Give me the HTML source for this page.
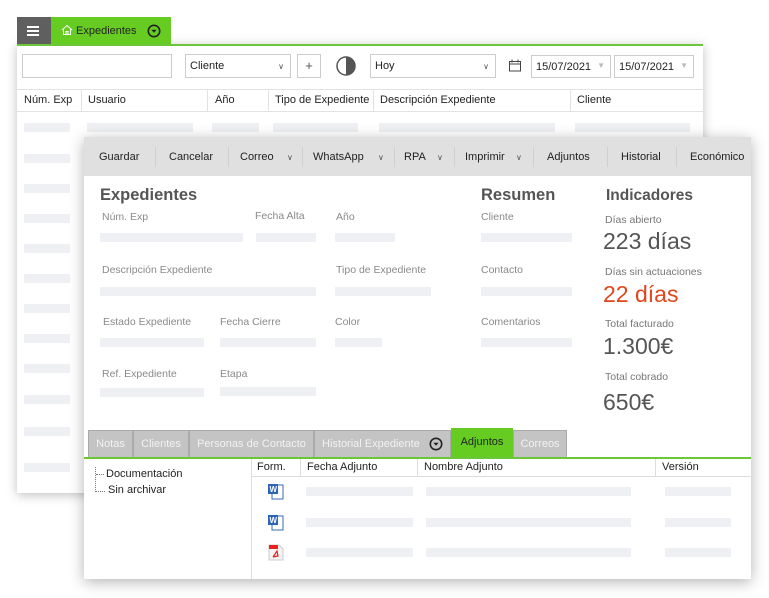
<!DOCTYPE html>
<html><head><meta charset="utf-8"><style>
*{box-sizing:border-box;margin:0;padding:0}
body{width:769px;height:598px;background:#fff;position:relative;overflow:hidden;font-family:"Liberation Sans","DejaVu Sans",sans-serif;font-size:11px;color:#222}
.a{position:absolute}
.bar{position:absolute;height:9px;background:#eef0f3}
.sep{position:absolute;top:10px;width:1px;height:20px;background:#cfcfcf}
.chev{position:absolute;font-size:8px;color:#555}
.lbl{position:absolute;color:#8a8a8a;font-size:10.5px}
.tab{position:absolute;top:430px;height:27px;background:#c4c4c4;border:1px solid #aaa;border-bottom:none;color:#f2f2f2;font-size:11px;line-height:27px;text-align:center}
</style></head><body>
<div class="a" style="left:17px;top:44px;width:686px;height:449px;background:#fff;box-shadow:0 2px 10px rgba(0,0,0,.25)"></div>
<div class="a" style="left:17px;top:17px;width:34px;height:28px;background:#5f5f5f"></div>
<div class="a" style="left:27px;top:26px;width:12px;height:1.5px;background:#fff;box-shadow:0 4px 0 #fff,0 8px 0 #fff"></div>
<div class="a" style="left:51px;top:17px;width:120px;height:28px;background:#66cc22"></div>
<svg class="a" style="left:61px;top:24px" width="12" height="12" viewBox="0 0 12 12"><path d="M1 6L6 1.5 11 6M2.5 5v5.5h7V5M5 10.5V7.5h2v3" fill="none" stroke="#fff" stroke-width="1"/></svg>
<div class="a" style="left:76px;top:25px;font-size:11px;color:#222">Expedientes</div>
<svg class="a" style="left:147px;top:24px" width="14" height="14" viewBox="0 0 14 14"><circle cx="7" cy="7" r="5.7" fill="none" stroke="#222" stroke-width="1.6"/><path d="M4.3 5.8h5.4L7 8.8z" fill="#222"/></svg>
<div class="a" style="left:17px;top:44px;width:686px;height:2px;background:#6cc63a"></div>
<div class="a" style="left:22px;top:54px;width:150px;height:24px;border:1px solid #ccc"></div>
<div class="a" style="left:185px;top:54px;width:106px;height:24px;border:1px solid #ccc;padding:5px 4px;font-size:11px">Cliente<span class="chev" style="right:6px;top:7px">&#8744;</span></div>
<div class="a" style="left:297px;top:54px;width:24px;height:24px;border:1px solid #ccc;text-align:center;line-height:22px;font-size:13px;color:#555">+</div>
<svg class="a" style="left:335px;top:55px" width="22" height="22" viewBox="0 0 22 22"><circle cx="11" cy="11" r="9" fill="none" stroke="#555" stroke-width="1.5"/><path d="M11 2a9 9 0 0 1 0 18z" fill="#555"/></svg>
<div class="a" style="left:370px;top:54px;width:126px;height:24px;border:1px solid #ccc;padding:5px 4px;font-size:11px">Hoy<span class="chev" style="right:6px;top:7px">&#8744;</span></div>
<svg class="a" style="left:508px;top:59px" width="14" height="13" viewBox="0 0 14 13"><rect x="1.5" y="2.5" width="11" height="9.5" fill="none" stroke="#444"/><path d="M1.5 5h11M4 0.5v3M10 0.5v3" stroke="#444"/></svg>
<div class="a" style="left:531px;top:55px;width:80px;height:23px;border:1px solid #ccc;padding:5px 4px;font-size:11px">15/07/2021<span class="a" style="right:5px;top:5px;color:#bbb;font-size:8px">&#9660;</span></div>
<div class="a" style="left:614px;top:55px;width:80px;height:23px;border:1px solid #ccc;padding:5px 4px;font-size:11px">15/07/2021<span class="a" style="right:5px;top:5px;color:#bbb;font-size:8px">&#9660;</span></div>
<div class="a" style="left:17px;top:89px;width:686px;height:23px;border-top:1px solid #e2e2e2;border-bottom:1px solid #e2e2e2"></div>
<div class="a" style="left:24px;top:94px;font-size:11px">Núm. Exp</div>
<div class="a" style="left:81px;top:89px;width:1px;height:23px;background:#e2e2e2"></div>
<div class="a" style="left:88px;top:94px;font-size:11px">Usuario</div>
<div class="a" style="left:207px;top:89px;width:1px;height:23px;background:#e2e2e2"></div>
<div class="a" style="left:215px;top:94px;font-size:11px">Año</div>
<div class="a" style="left:268px;top:89px;width:1px;height:23px;background:#e2e2e2"></div>
<div class="a" style="left:275px;top:94px;font-size:11px">Tipo de Expediente</div>
<div class="a" style="left:373px;top:89px;width:1px;height:23px;background:#e2e2e2"></div>
<div class="a" style="left:380px;top:94px;font-size:11px">Descripción Expediente</div>
<div class="a" style="left:570px;top:89px;width:1px;height:23px;background:#e2e2e2"></div>
<div class="a" style="left:577px;top:94px;font-size:11px">Cliente</div>
<div class="bar" style="left:87px;top:123px;width:106px"></div>
<div class="bar" style="left:212px;top:123px;width:47px"></div>
<div class="bar" style="left:273px;top:123px;width:85px"></div>
<div class="bar" style="left:379px;top:123px;width:176px"></div>
<div class="bar" style="left:575px;top:123px;width:115px"></div>
<div class="bar" style="left:24px;top:123px;width:46px"></div>
<div class="bar" style="left:24px;top:154px;width:46px"></div>
<div class="bar" style="left:24px;top:184px;width:46px"></div>
<div class="bar" style="left:24px;top:214px;width:46px"></div>
<div class="bar" style="left:24px;top:244px;width:46px"></div>
<div class="bar" style="left:24px;top:274px;width:46px"></div>
<div class="bar" style="left:24px;top:304px;width:46px"></div>
<div class="bar" style="left:24px;top:334px;width:46px"></div>
<div class="bar" style="left:24px;top:364px;width:46px"></div>
<div class="bar" style="left:24px;top:395px;width:46px"></div>
<div class="bar" style="left:24px;top:427px;width:46px"></div>
<div class="bar" style="left:24px;top:463px;width:46px"></div>

<div class="a" style="left:84px;top:137px;width:667px;height:442px;background:#fff;box-shadow:0 3px 14px rgba(0,0,0,.3)"></div>
<div class="a" style="left:84px;top:137px;width:667px;height:39px;background:#e0e0e0;font-size:11px">
<div class="a" style="left:15px;top:14px">Guardar</div><div class="sep" style="left:71px"></div>
<div class="a" style="left:85px;top:14px">Cancelar</div><div class="sep" style="left:144px"></div>
<div class="a" style="left:156px;top:14px">Correo</div><div class="chev" style="left:203px;top:16px">&#8744;</div><div class="sep" style="left:218px"></div>
<div class="a" style="left:229px;top:14px">WhatsApp</div><div class="chev" style="left:294px;top:16px">&#8744;</div><div class="sep" style="left:310px"></div>
<div class="a" style="left:320px;top:14px">RPA</div><div class="chev" style="left:353px;top:16px">&#8744;</div><div class="sep" style="left:370px"></div>
<div class="a" style="left:381px;top:14px">Imprimir</div><div class="chev" style="left:432px;top:16px">&#8744;</div><div class="sep" style="left:449px"></div>
<div class="a" style="left:463px;top:14px">Adjuntos</div><div class="sep" style="left:523px"></div>
<div class="a" style="left:537px;top:14px">Historial</div><div class="sep" style="left:592px"></div>
<div class="a" style="left:606px;top:14px">Económico</div>
</div>
<div class="a" style="left:100px;top:186px;font-size:16.5px;font-weight:bold;color:#555">Expedientes</div>
<div class="lbl" style="left:102px;top:211px">Núm. Exp</div>
<div class="lbl" style="left:255px;top:210px">Fecha Alta</div>
<div class="lbl" style="left:336px;top:211px">Año</div>
<div class="bar" style="left:100px;top:233px;width:143px"></div>
<div class="bar" style="left:256px;top:233px;width:60px"></div>
<div class="bar" style="left:335px;top:233px;width:60px"></div>
<div class="lbl" style="left:102px;top:264px">Descripción Expediente</div>
<div class="lbl" style="left:336px;top:264px">Tipo de Expediente</div>
<div class="bar" style="left:100px;top:287px;width:216px"></div>
<div class="bar" style="left:335px;top:287px;width:96px"></div>
<div class="lbl" style="left:103px;top:316px">Estado Expediente</div>
<div class="lbl" style="left:220px;top:316px">Fecha Cierre</div>
<div class="lbl" style="left:335px;top:316px">Color</div>
<div class="bar" style="left:100px;top:338px;width:104px"></div>
<div class="bar" style="left:220px;top:338px;width:96px"></div>
<div class="bar" style="left:335px;top:338px;width:47px"></div>
<div class="lbl" style="left:102px;top:368px">Ref. Expediente</div>
<div class="lbl" style="left:220px;top:368px">Etapa</div>
<div class="bar" style="left:100px;top:388px;width:104px"></div>
<div class="bar" style="left:220px;top:387px;width:96px"></div>
<div class="a" style="left:481px;top:186px;font-size:16.5px;font-weight:bold;color:#555">Resumen</div>
<div class="lbl" style="left:481px;top:211px">Cliente</div>
<div class="bar" style="left:481px;top:233px;width:91px"></div>
<div class="lbl" style="left:481px;top:264px">Contacto</div>
<div class="bar" style="left:481px;top:287px;width:91px"></div>
<div class="lbl" style="left:481px;top:316px">Comentarios</div>
<div class="bar" style="left:481px;top:338px;width:91px"></div>
<div class="a" style="left:606px;top:187px;font-size:15.5px;font-weight:bold;color:#555">Indicadores</div>
<div class="lbl" style="left:605px;top:214px;color:#777">Días abierto</div>
<div class="a" style="left:603px;top:228px;font-size:23px;color:#555">223 días</div>
<div class="lbl" style="left:605px;top:266px;color:#777">Días sin actuaciones</div>
<div class="a" style="left:603px;top:281px;font-size:23px;color:#e0461a">22 días</div>
<div class="lbl" style="left:605px;top:318px;color:#777">Total facturado</div>
<div class="a" style="left:603px;top:333px;font-size:23px;color:#555">1.300€</div>
<div class="lbl" style="left:605px;top:371px;color:#777">Total cobrado</div>
<div class="a" style="left:603px;top:389px;font-size:23px;color:#555">650€</div>

<div class="tab" style="left:88px;width:45px">Notas</div>
<div class="tab" style="left:133px;width:56px">Clientes</div>
<div class="tab" style="left:189px;width:125px">Personas de Contacto</div>
<div class="tab" style="left:314px;width:137px;text-align:left;padding-left:7px">Historial Expediente</div>
<svg class="a" style="left:429px;top:437px" width="14" height="14" viewBox="0 0 14 14"><circle cx="7" cy="7" r="5.7" fill="none" stroke="#222" stroke-width="1.6"/><path d="M4.3 5.8h5.4L7 8.8z" fill="#222"/></svg>
<div class="tab" style="left:451px;width:62px;background:#66cc22;border-color:#66cc22;color:#222;top:428px;height:29px">Adjuntos</div>
<div class="tab" style="left:513px;width:54px">Correos</div>
<div class="a" style="left:84px;top:457px;width:667px;height:2px;background:#6cc63a"></div>
<div class="a" style="left:95px;top:467px;width:1px;height:25px;border-left:1px dotted #777"></div>
<div class="a" style="left:96px;top:474px;width:8px;border-top:1px dotted #777"></div>
<div class="a" style="left:96px;top:491px;width:9px;border-top:1px dotted #777"></div>
<div class="a" style="left:106px;top:468px;font-size:11px">Documentación</div>
<div class="a" style="left:108px;top:484px;font-size:11px">Sin archivar</div>
<div class="a" style="left:251px;top:459px;width:1px;height:120px;background:#ddd"></div>
<div class="a" style="left:252px;top:476px;width:499px;height:1px;background:#ddd"></div>
<div class="a" style="left:257px;top:461px;font-size:11px">Form.</div>
<div class="a" style="left:300px;top:459px;width:1px;height:17px;background:#ddd"></div>
<div class="a" style="left:307px;top:461px;font-size:11px">Fecha Adjunto</div>
<div class="a" style="left:417px;top:459px;width:1px;height:17px;background:#ddd"></div>
<div class="a" style="left:424px;top:461px;font-size:11px">Nombre Adjunto</div>
<div class="a" style="left:655px;top:459px;width:1px;height:17px;background:#ddd"></div>
<div class="a" style="left:662px;top:461px;font-size:11px">Versión</div>
<svg class="a" style="left:267px;top:483px" width="18" height="17" viewBox="0 0 18 17"><rect x="5" y="2" width="11" height="14" fill="#fff" stroke="#3a6db5"/><rect x="1" y="1" width="10" height="10" fill="#2b64b8"/><text x="2.5" y="9" font-size="8" fill="#fff" font-family="Liberation Sans" font-weight="bold">W</text></svg>
<svg class="a" style="left:267px;top:514px" width="18" height="17" viewBox="0 0 18 17"><rect x="5" y="2" width="11" height="14" fill="#fff" stroke="#3a6db5"/><rect x="1" y="1" width="10" height="10" fill="#2b64b8"/><text x="2.5" y="9" font-size="8" fill="#fff" font-family="Liberation Sans" font-weight="bold">W</text></svg>
<svg class="a" style="left:267px;top:544px" width="18" height="17" viewBox="0 0 18 17"><path d="M2 1h10l4 4v11H2z" fill="#f3f3f3" stroke="#ccc"/><rect x="2" y="1" width="9" height="4" fill="#e8221c"/><path d="M6 13l4-6 1 5-5 1" fill="none" stroke="#e8221c" stroke-width="1.2"/></svg>
<div class="bar" style="left:306px;top:487px;width:107px"></div>
<div class="bar" style="left:426px;top:487px;width:205px"></div>
<div class="bar" style="left:665px;top:487px;width:66px"></div>
<div class="bar" style="left:306px;top:518px;width:107px"></div>
<div class="bar" style="left:426px;top:518px;width:205px"></div>
<div class="bar" style="left:665px;top:518px;width:66px"></div>
<div class="bar" style="left:306px;top:548px;width:107px"></div>
<div class="bar" style="left:426px;top:548px;width:205px"></div>
<div class="bar" style="left:665px;top:548px;width:66px"></div>
</body></html>
